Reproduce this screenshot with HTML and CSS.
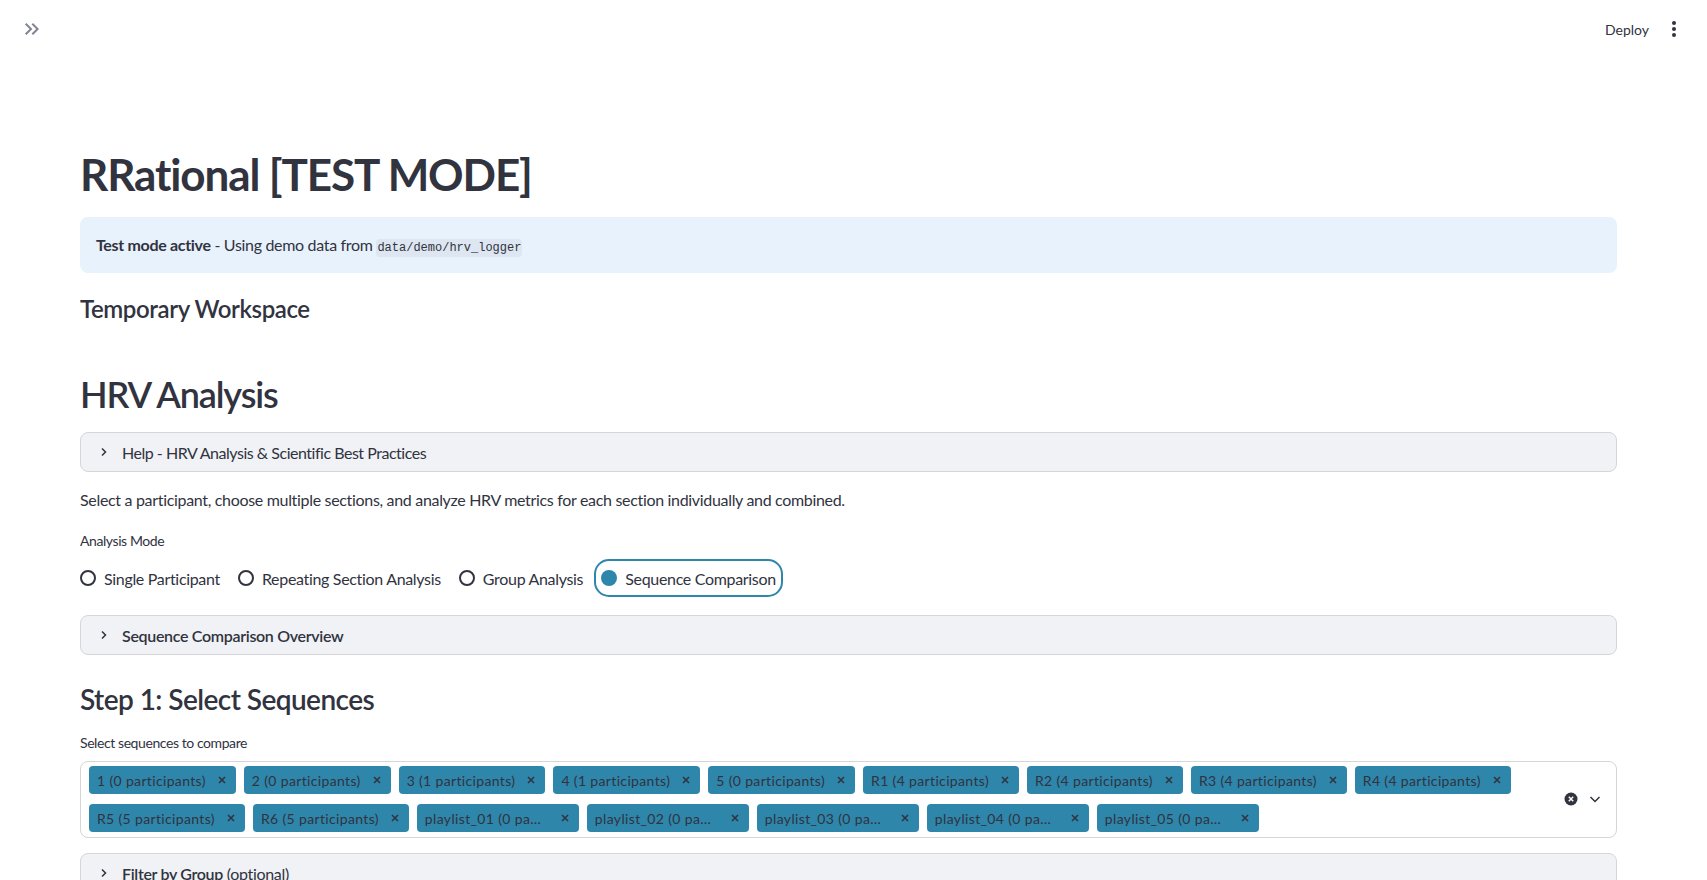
FILE: index.html
```html
<!DOCTYPE html>
<html lang="en">
<head>
  <meta charset="UTF-8" />
  <title>RRational</title>
  <link rel="stylesheet" href="styles.css">
</head>
<body>
  <header class="topbar">
    <button class="icon-btn" title="Open sidebar">
      <svg width="24" height="24" viewBox="0 0 24 24"><path d="M6.41 6 5 7.41 9.58 12 5 16.59 6.41 18l6-6z M13 6l-1.41 1.41L16.17 12l-4.58 4.59L13 18l6-6z" fill="#808495"/></svg>
    </button>
    <div class="topbar-actions">
      <span class="deploy">Deploy</span>
      <button class="icon-btn" title="Main menu">
        <svg width="24" height="24" viewBox="0 0 24 24"><circle cx="12" cy="6" r="2" fill="#31333f"/><circle cx="12" cy="12" r="2" fill="#31333f"/><circle cx="12" cy="18" r="2" fill="#31333f"/></svg>
      </button>
    </div>
  </header>

  <main class="main">
    <h1 class="title">RRational [TEST MODE]</h1>

    <div class="alert">
      <strong>Test mode active</strong> - Using demo data from <code>data/demo/hrv_logger</code>
    </div>

    <h4 class="subheading">Temporary Workspace</h4>

    <h2 class="section-title">HRV Analysis</h2>

    <details class="expander help">
      <summary>
        <svg class="chev" width="14" height="14" viewBox="0 0 14 14"><path d="M5 3.5 8.5 7 5 10.5" fill="none" stroke="#31333f" stroke-width="1.5"/></svg>
        <span>Help - HRV Analysis &amp; Scientific Best Practices</span>
      </summary>
    </details>

    <p class="intro">Select a participant, choose multiple sections, and analyze HRV metrics for each section individually and combined.</p>

    <div class="field-label mode-label">Analysis Mode</div>
    <div class="radio-group">
      <label class="radio"><span class="dot"></span>Single Participant</label>
      <label class="radio"><span class="dot"></span>Repeating Section Analysis</label>
      <label class="radio"><span class="dot"></span>Group Analysis</label>
      <label class="radio checked"><span class="dot"></span>Sequence Comparison</label>
    </div>

    <details class="expander overview">
      <summary>
        <svg class="chev" width="14" height="14" viewBox="0 0 14 14"><path d="M5 3.5 8.5 7 5 10.5" fill="none" stroke="#31333f" stroke-width="1.5"/></svg>
        <strong>Sequence Comparison Overview</strong>
      </summary>
    </details>

    <h3 class="step-title">Step 1: Select Sequences</h3>

    <div class="field-label seq-label">Select sequences to compare</div>
    <div class="multiselect">
      <div class="tags">
        <span class="tag"><span>1 (0 participants)</span><svg viewBox="0 0 10 10"><path d="M2 2l6 6M8 2 2 8"/></svg></span>
        <span class="tag"><span>2 (0 participants)</span><svg viewBox="0 0 10 10"><path d="M2 2l6 6M8 2 2 8"/></svg></span>
        <span class="tag"><span>3 (1 participants)</span><svg viewBox="0 0 10 10"><path d="M2 2l6 6M8 2 2 8"/></svg></span>
        <span class="tag"><span>4 (1 participants)</span><svg viewBox="0 0 10 10"><path d="M2 2l6 6M8 2 2 8"/></svg></span>
        <span class="tag"><span>5 (0 participants)</span><svg viewBox="0 0 10 10"><path d="M2 2l6 6M8 2 2 8"/></svg></span>
        <span class="tag"><span>R1 (4 participants)</span><svg viewBox="0 0 10 10"><path d="M2 2l6 6M8 2 2 8"/></svg></span>
        <span class="tag"><span>R2 (4 participants)</span><svg viewBox="0 0 10 10"><path d="M2 2l6 6M8 2 2 8"/></svg></span>
        <span class="tag"><span>R3 (4 participants)</span><svg viewBox="0 0 10 10"><path d="M2 2l6 6M8 2 2 8"/></svg></span>
        <span class="tag"><span>R4 (4 participants)</span><svg viewBox="0 0 10 10"><path d="M2 2l6 6M8 2 2 8"/></svg></span>
        <span class="tag"><span>R5 (5 participants)</span><svg viewBox="0 0 10 10"><path d="M2 2l6 6M8 2 2 8"/></svg></span>
        <span class="tag"><span>R6 (5 participants)</span><svg viewBox="0 0 10 10"><path d="M2 2l6 6M8 2 2 8"/></svg></span>
        <span class="tag"><span class="trunc">playlist_01 (0 pa…</span><svg viewBox="0 0 10 10"><path d="M2 2l6 6M8 2 2 8"/></svg></span>
        <span class="tag"><span class="trunc">playlist_02 (0 pa…</span><svg viewBox="0 0 10 10"><path d="M2 2l6 6M8 2 2 8"/></svg></span>
        <span class="tag"><span class="trunc">playlist_03 (0 pa…</span><svg viewBox="0 0 10 10"><path d="M2 2l6 6M8 2 2 8"/></svg></span>
        <span class="tag"><span class="trunc">playlist_04 (0 pa…</span><svg viewBox="0 0 10 10"><path d="M2 2l6 6M8 2 2 8"/></svg></span>
        <span class="tag"><span class="trunc">playlist_05 (0 pa…</span><svg viewBox="0 0 10 10"><path d="M2 2l6 6M8 2 2 8"/></svg></span>
      </div>
      <div class="ms-controls">
        <svg width="14" height="14" viewBox="0 0 14 14"><circle cx="7" cy="7" r="6.5" fill="#31333f"/><path d="M4.8 4.8l4.4 4.4M9.2 4.8l-4.4 4.4" stroke="#fff" stroke-width="1.5"/></svg>
        <svg width="14" height="14" viewBox="0 0 14 14"><path d="M2.5 5 7 9.5 11.5 5" fill="none" stroke="#31333f" stroke-width="1.5"/></svg>
      </div>
    </div>

    <details class="expander filter">
      <summary>
        <svg class="chev" width="14" height="14" viewBox="0 0 14 14"><path d="M5 3.5 8.5 7 5 10.5" fill="none" stroke="#31333f" stroke-width="1.5"/></svg>
        <span><strong>Filter by Group</strong> (optional)</span>
      </summary>
    </details>
  </main>
</body>
</html>
```

FILE: styles.css
```css
body {
  margin: 0;
  font-family: Lato, "Noto Sans", sans-serif;
  color: #31333f;
  background: #fff;
  letter-spacing: -0.02em;
}

.topbar {
  height: 58px;
  display: flex;
  align-items: center;
  justify-content: space-between;
  padding: 0 21px 0 20px;
}

.topbar-actions {
  display: flex;
  align-items: center;
  gap: 13px;
}

.icon-btn {
  border: none;
  background: none;
  padding: 0;
  display: flex;
}

.deploy {
  font-size: 14px;
  letter-spacing: 0;
}

.main {
  padding: 90px 90px 40px 80px;
}

.title {
  margin: 0;
  font-size: 44px;
  line-height: 52px;
  font-weight: 700;
  letter-spacing: -0.025em;
}

.alert {
  margin-top: 17px;
  padding: 16px;
  background: #e8f2fc;
  border-radius: 8px;
  font-size: 16px;
  line-height: 24px;
}

.alert strong {
  font-weight: 700;
}

.alert code {
  font-family: "Liberation Mono", monospace;
  font-size: 12px;
  line-height: 1;
  letter-spacing: 0;
  background: rgba(172, 177, 195, 0.18);
  border-radius: 4px;
  padding: 2px 1px;
}

.subheading {
  margin: 21px 0 0;
  font-size: 24px;
  line-height: 29px;
  font-weight: 600;
  letter-spacing: -0.017em;
}

.section-title {
  margin: 50px 0 0;
  font-size: 36px;
  line-height: 43px;
  font-weight: 600;
  letter-spacing: -0.032em;
}

.expander {
  background: #f0f2f6;
  border: 1px solid #d6d6d9;
  border-radius: 8px;
}

.expander summary {
  list-style: none;
  height: 38px;
  display: flex;
  align-items: center;
  gap: 11px;
  padding: 0 16px;
  font-size: 16px;
}

.expander summary::-webkit-details-marker {
  display: none;
}

.expander strong {
  font-weight: 600;
}

.help {
  margin-top: 16px;
}

.help summary {
  letter-spacing: -0.03em;
}

.intro {
  margin: 16px 0 0;
  font-size: 16px;
  line-height: 24px;
}

.field-label {
  font-size: 14px;
  line-height: 20px;
  letter-spacing: -0.03em;
}

.mode-label {
  margin-top: 19px;
}

.radio-group {
  margin-top: 15px;
  display: flex;
  gap: 18px;
}

.radio {
  display: flex;
  align-items: center;
  gap: 8px;
  height: 24px;
  font-size: 16px;
  border-radius: 8px;
}

.dot {
  width: 16px;
  height: 16px;
  box-sizing: border-box;
  border: 2px solid #31333f;
  border-radius: 50%;
}

.radio.checked {
  outline: 2px solid #2e86ab;
  outline-offset: 5px;
}

.radio.checked .dot {
  border: none;
  background: #2e86ab;
}

.overview {
  margin-top: 25px;
}

.step-title {
  margin: 27px 0 0;
  font-size: 28px;
  line-height: 34px;
  font-weight: 600;
  letter-spacing: -0.02em;
}

.seq-label {
  margin-top: 17px;
}

.multiselect {
  margin-top: 8px;
  display: flex;
  align-items: center;
  border: 1px solid #d6d6d9;
  border-radius: 8px;
  padding: 4px 14px 5px 8px;
}

.tags {
  flex: 1;
  display: flex;
  flex-wrap: wrap;
  gap: 10px 8px;
}

.tag {
  height: 28px;
  display: inline-flex;
  align-items: center;
  gap: 11px;
  padding: 0 9px 0 8px;
  background: #2e86ab;
  border-radius: 4px;
  font-size: 14px;
  letter-spacing: 0.025em;
  white-space: nowrap;
}

.tag span {
  min-width: 108px;
}

.tag .trunc {
  width: 124px;
}

.tag svg {
  width: 10px;
  height: 10px;
  stroke: #31333f;
  stroke-width: 1.6;
}

.ms-controls {
  display: flex;
  align-items: center;
  gap: 10px;
}

.filter {
  margin-top: 15px;
}
```
